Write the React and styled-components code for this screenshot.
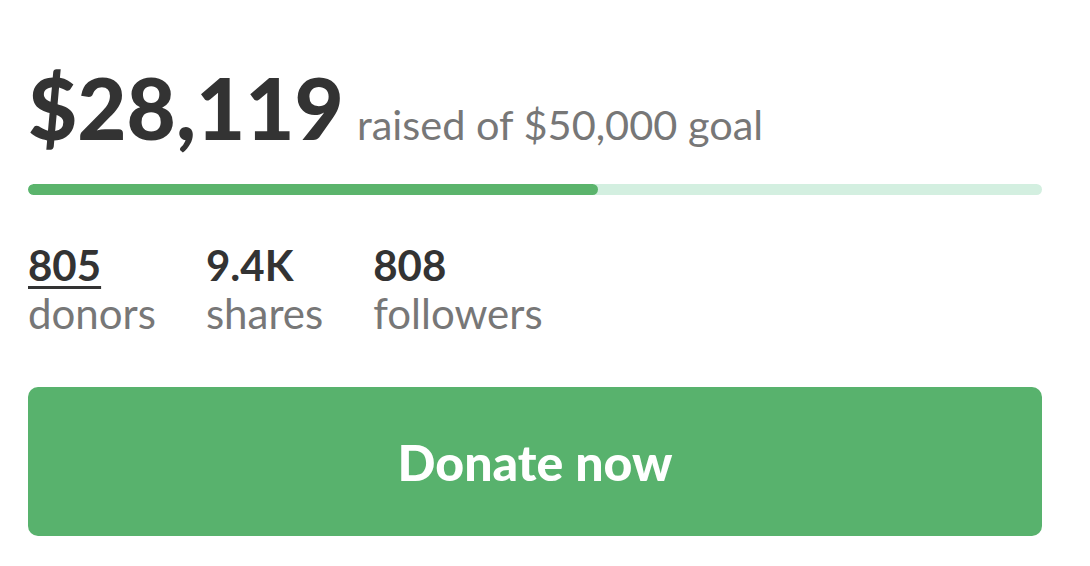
import React from 'react';
import styled, { createGlobalStyle } from 'styled-components';

const GlobalStyle = createGlobalStyle`
    body {
        margin: 0;
        background: #ffffff;
        font-family: Lato, "Open Sans", sans-serif;
    }
`;

const Wrapper = styled.div`
    padding: 65px 48px 0 28px;
    width: 1014px;
    display: flex;
    flex-direction: column;
`;

const Header = styled.div`
    display: flex;
    align-items: baseline;
    gap: 13px;
`;

const Amount = styled.span`
    font-size: 85px;
    font-weight: 900;
    color: #333333;
    line-height: 1;
`;

const Goal = styled.span`
    font-size: 41.5px;
    color: #777777;
`;

const Track = styled.div`
    margin-top: 34px;
    height: 11px;
    border-radius: 6px;
    background: #d3efe0;
    overflow: hidden;
`;

const Fill = styled.div`
    height: 100%;
    border-radius: 6px;
    background: #5bb46c;
`;

const Stats = styled.div`
    margin-top: 46px;
    display: flex;
    gap: 50px;
`;

const Stat = styled.div`
    display: flex;
    flex-direction: column;
    line-height: 48px;
`;

const Value = styled.span`
    font-size: 42px;
    font-weight: 700;
    color: #333333;
    text-decoration: ${p => (p.$underline ? 'underline' : 'none')};
    text-decoration-thickness: 3px;
    text-underline-offset: 5px;
`;

const Label = styled.span`
    font-size: 42px;
    color: #777777;
`;

const DonateButton = styled.button`
    margin-top: 50px;
    height: 149px;
    border: none;
    border-radius: 10px;
    background: #58b26d;
    color: #ffffff;
    font-family: Lato, "Open Sans", sans-serif;
    font-size: 50px;
    font-weight: 900;
    cursor: pointer;
`;

const raised = 28119;
const goal = 50000;

function App() {
    const stats = [
        { value: '805', label: 'donors', underline: true },
        { value: '9.4K', label: 'shares' },
        { value: '808', label: 'followers' },
    ];
    return (
        <>
            <GlobalStyle />
            <Wrapper>
                <Header>
                    <Amount>$28,119</Amount>
                    <Goal>raised of $50,000 goal</Goal>
                </Header>
                <Track>
                    <Fill style={{ width: `${(raised / goal) * 100}%` }} />
                </Track>
                <Stats>
                    {stats.map(s => (
                        <Stat key={s.label}>
                            <Value $underline={s.underline}>{s.value}</Value>
                            <Label>{s.label}</Label>
                        </Stat>
                    ))}
                </Stats>
                <DonateButton>Donate now</DonateButton>
            </Wrapper>
        </>
    );
}

export default App;
